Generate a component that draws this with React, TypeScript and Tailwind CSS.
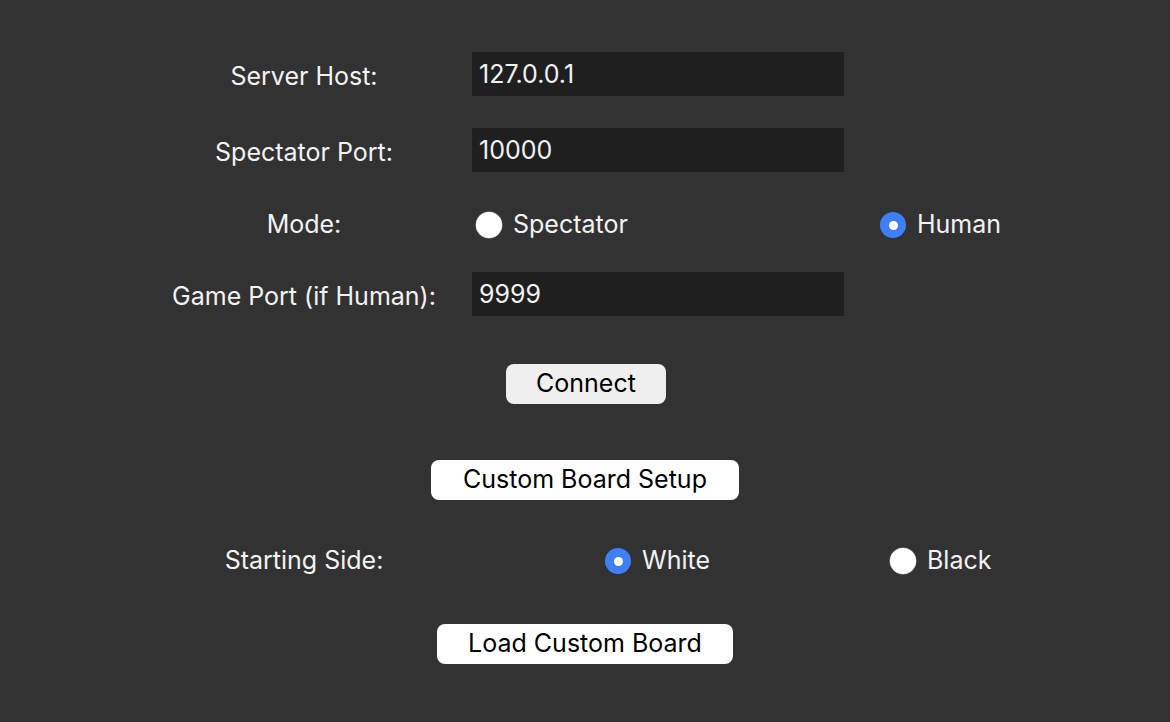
import React from "react";

function Radio({ checked, label }: { checked: boolean; label: string }) {
  return (
    <div className="flex items-center gap-[11px]">
      {checked ? (
        <span className="flex h-[26px] w-[26px] items-center justify-center rounded-full bg-[#3f7ff6]">
          <span className="h-[9px] w-[9px] rounded-full bg-white"></span>
        </span>
      ) : (
        <span className="h-[26px] w-[26px] rounded-full bg-white shadow-[0_0_0_0.5px_#9a9a9a]"></span>
      )}
      <span>{label}</span>
    </div>
  );
}

function Field({ label, value }: { label: string; value: string }) {
  return (
    <div className="flex h-[44px] items-center">
      <div className="w-[288px] pt-[5px] text-center">{label}</div>
      <div className="ml-[24px] flex h-[44px] w-[372px] items-center bg-[#1f1f1f] pl-[7px] pt-[1px]">
        {value}
      </div>
    </div>
  );
}

export default function App() {
  return (
    <div
      className="flex h-[722px] w-[1170px] flex-col bg-[#323232] pl-[160px] pt-[52px] text-[25px] text-[#f2f2f2]"
      style={{ fontFamily: "Inter, 'Liberation Sans', sans-serif" }}
    >
      <Field label="Server Host:" value="127.0.0.1" />
      <div className="h-[32px]"></div>
      <Field label="Spectator Port:" value="10000" />

      <div className="mt-[38px] flex h-[30px] items-center">
        <div className="w-[288px] text-center">Mode:</div>
        <div className="ml-[28px] w-[404px]">
          <Radio checked={false} label="Spectator" />
        </div>
        <Radio checked={true} label="Human" />
      </div>

      <div className="mt-[32px]">
        <Field label="Game Port (if Human):" value="9999" />
      </div>

      <div className="mt-[48px] flex w-[850px] justify-center">
        <button className="ml-[2px] h-[40px] w-[160px] rounded-[8px] bg-[#efefef] text-black">
          Connect
        </button>
      </div>

      <div className="mt-[56px] flex w-[850px] justify-center">
        <button className="h-[40px] w-[308px] rounded-[8px] bg-white text-black">
          Custom Board Setup
        </button>
      </div>

      <div className="mt-[46px] flex h-[30px] items-center">
        <div className="w-[288px] text-center">Starting Side:</div>
        <div className="ml-[157px] w-[285px]">
          <Radio checked={true} label="White" />
        </div>
        <Radio checked={false} label="Black" />
      </div>

      <div className="mt-[48px] flex w-[850px] justify-center">
        <button className="h-[40px] w-[296px] rounded-[8px] bg-white text-black">
          Load Custom Board
        </button>
      </div>
    </div>
  );
}
